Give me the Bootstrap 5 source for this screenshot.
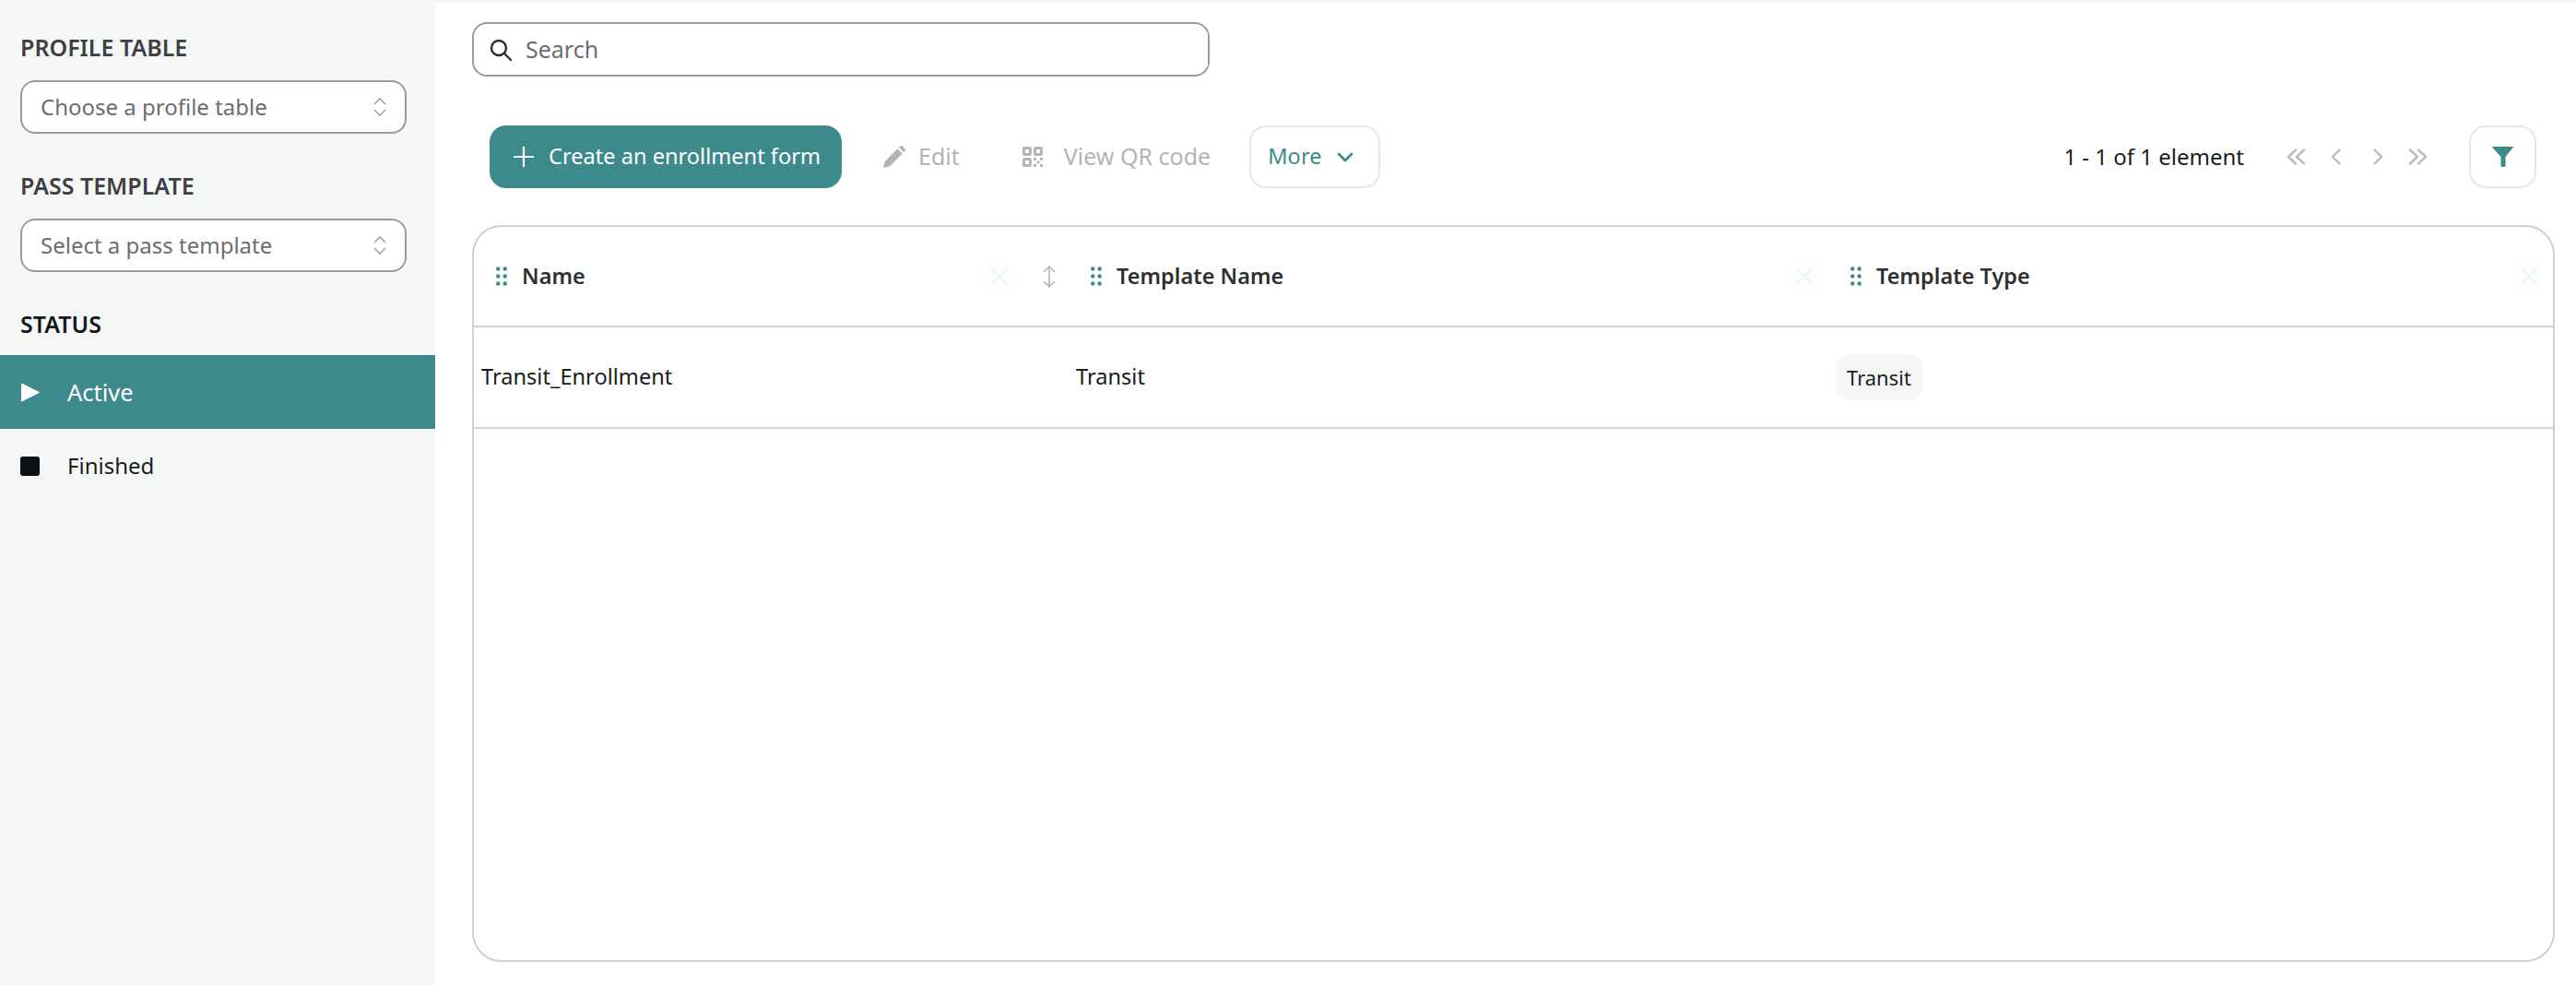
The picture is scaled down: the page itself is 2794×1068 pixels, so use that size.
<!DOCTYPE html>
<html lang="en">
<head>
  <meta charset="UTF-8" />
  <meta name="viewport" content="width=device-width, initial-scale=1" />
  <title>Enrollment forms</title>
  <link href="https://cdn.jsdelivr.net/npm/bootstrap@5.3.0/dist/css/bootstrap.min.css" rel="stylesheet" />
  <style>
    html, body { height: 100%; }
    body { font-family: "Noto Sans", "Liberation Sans", sans-serif; font-size: 23.600px; color: #1a1d20; background: #fff; border-top: 3px solid #f6f7f7; overflow: hidden; }
    .app-shell { height: 100%; }
    .side-panel { width: 472px; flex: none; background: #f5f7f7; padding-top: 32px; }
    .side-label { font-size: 25px; font-weight: 600; color: #3d3f42; line-height: 32px; padding-left: 22px; margin-bottom: 20px; }
    .side-label.dark { color: #14171a; margin-bottom: 18px; }
    .side-select { width: 419px; height: 58px; margin: 0 0 40px 22px; font-size: 24px; color: #6b6d6f; background-color: #fff; border: 2px solid #9b9b9b; border-radius: 16px; padding: 0 50px 0 20px;
      background-image: url("data:image/svg+xml,%3csvg xmlns='http://www.w3.org/2000/svg' viewBox='0 0 14 22'%3e%3cpath fill='none' stroke='%23a3a3a3' stroke-width='1.6' d='M1 8l6-6 6 6M1 14l6 6 6-6'/%3e%3c/svg%3e");
      background-size: 14px 22px; background-position: right 20px center; }
    .status-list .list-group-item { height: 80px; display: flex; align-items: center; gap: 30px; padding: 0 0 0 22px; border: 0; background: transparent; color: #1a1d20; font-size: 24px; border-radius: 0; }
    .status-list .list-group-item.active { background: #3d8a8c; color: #fff; font-size: 25.500px; }
    .stop-box { width: 21px; height: 21px; background: #0d1116; border-radius: 3px; flex: none; }
    .content-pane { min-width: 0; padding: 21px 23px 25px 40px; }
    .search-box { width: 800px; height: 59px; border: 2px solid #9b9b9b; border-radius: 16px; padding-left: 17px; gap: 15px; }
    .search-box input { border: 0; outline: 0; padding: 0; flex: 1; font-size: 25px; min-width: 0; }
    .search-box input::placeholder { color: #6b6d6f; opacity: 1; }
    .tool-row { margin: 53px 20px 40px 19px; gap: 22px; height: 68px; }
    .btn-teal { background: #3d8a8c; color: #fff; border: 0; border-radius: 18px; height: 68px; padding: 0 23px 0 26px; font-size: 23.600px; gap: 16px; }
    .btn-teal:hover { background: #3d8a8c; color: #fff; }
    .btn-off { color: #b4b4b4; border: 0; padding: 0 23px; font-size: 25px; gap: 14px; }
    .btn-off.qr { gap: 23px; padding-right: 20px; }
    .btn-outline-soft { height: 68px; border: 2px solid #e6e8e8; border-radius: 18px; background: #fff; color: #3d8a8c; font-size: 23.600px; }
    .more-btn { padding: 0 27px 0 18px; gap: 17px; }
    .filter-btn { width: 73px; padding: 0; margin-left: 45px; justify-content: center; }
    .page-count { font-size: 24px; color: #1a1d20; margin-right: 46px; }
    .pager { gap: 27px; }
    .pager .mid { margin-left: 8px; }
    .data-frame { flex: 1; border: 2px solid #d0d0d0; border-radius: 32px; overflow: hidden; min-height: 0; }
    .data-table { table-layout: fixed; margin: 0; }
    .data-table th, .data-table td { border-bottom: 2px solid #d0d0d0; vertical-align: middle; padding: 0 0 0 8px; box-shadow: none; }
    .data-table th { height: 108px; padding-left: 24px; font-weight: 600; color: #2d2f31; font-size: 23.500px; }
    .data-table td { height: 110px; font-size: 23.600px; color: #1a1d20; }
    .col-one { width: 645px; }
    .col-two { width: 824px; }
    .head-cell { gap: 16px; }
    .close-x { margin-left: auto; width: 28px; height: 34px; background: #fcfdfd; display: flex; align-items: center; justify-content: center; margin-right: 12px; border-radius: 6px; }
    .close-x.with-sort { margin-right: 0; }
    .sort-icon { margin: 0 14px 0 17px; }
    .type-chip { display: inline-flex; align-items: center; height: 50px; padding: 0 12px; font-size: 22px; background: #f5f7f7; border-radius: 14px; }
  </style>
</head>
<body>
  <div class="app-shell d-flex">
    <aside class="side-panel">
      <div class="side-label">PROFILE TABLE</div>
      <select class="form-select side-select"><option>Choose a profile table</option></select>
      <div class="side-label">PASS TEMPLATE</div>
      <select class="form-select side-select"><option>Select a pass template</option></select>
      <div class="side-label dark">STATUS</div>
      <div class="list-group status-list">
        <a class="list-group-item active" href="#">
          <svg width="21" height="21" viewBox="0 0 21 21"><path fill="#fff" stroke="#fff" stroke-linejoin="round" d="M1.500 1v19l19-9.500z"/></svg>
          Active
        </a>
        <a class="list-group-item" href="#"><span class="stop-box"></span>Finished</a>
      </div>
    </aside>

    <main class="content-pane flex-grow-1 d-flex flex-column">
      <div class="search-box d-flex align-items-center">
        <svg width="24" height="24" viewBox="0 0 24 24" fill="none" stroke="#2b2d2f" stroke-width="2.400" stroke-linecap="round"><circle cx="10" cy="10" r="8"/><path d="M16 16l7 7"/></svg>
        <input type="text" placeholder="Search" />
      </div>

      <div class="tool-row d-flex align-items-center">
        <button class="btn btn-teal d-flex align-items-center">
          <svg width="22" height="22" viewBox="0 0 22 22" stroke="#fff" stroke-width="2.200" stroke-linecap="round"><path d="M11 1v20M1 11h20"/></svg>
          Create an enrollment form
        </button>
        <button class="btn btn-off d-flex align-items-center">
          <svg width="24" height="24" viewBox="0 0 24 24" fill="#b4b4b4"><path d="M0 24l1.800-7L15.500 3.300l5.200 5.200L7 22.200zM17 1.800l1.300-1.300c.7-.7 1.800-.7 2.500 0l2.700 2.700c.7.7.7 1.800 0 2.500L22.200 7z"/></svg>
          Edit
        </button>
        <button class="btn btn-off qr d-flex align-items-center">
          <svg width="22" height="22" viewBox="0 0 22 22" fill="#b4b4b4"><path fill-rule="evenodd" d="M2 0h6a2 2 0 0 1 2 2v6a2 2 0 0 1-2 2H2a2 2 0 0 1-2-2V2a2 2 0 0 1 2-2zm1 3v4h4V3zM14 0h6a2 2 0 0 1 2 2v6a2 2 0 0 1-2 2h-6a2 2 0 0 1-2-2V2a2 2 0 0 1 2-2zm1 3v4h4V3zM2 12h6a2 2 0 0 1 2 2v6a2 2 0 0 1-2 2H2a2 2 0 0 1-2-2v-6a2 2 0 0 1 2-2zm1 3v4h4v-4z"/><path d="M12 12h3v3h-3zM19 12h3v3h-3zM15.500 15.500h3v3h-3zM12 19h3v3h-3zM19 19h3v3h-3z"/></svg>
          View QR code
        </button>
        <button class="btn btn-outline-soft more-btn d-flex align-items-center">
          More
          <svg width="18" height="11" viewBox="0 0 18 11" fill="none" stroke="#3d8a8c" stroke-width="2.800" stroke-linecap="round" stroke-linejoin="round"><path d="M2 2l7 7 7-7"/></svg>
        </button>

        <div class="ms-auto d-flex align-items-center">
          <span class="page-count">1 - 1 of 1 element</span>
          <div class="pager d-flex align-items-center">
            <svg width="21" height="18" viewBox="0 0 21 18" fill="none" stroke="#bbb" stroke-width="2.400" stroke-linecap="round" stroke-linejoin="round"><path d="M10 1.500L2 9l8 7.500M19 1.500L11 9l8 7.500"/></svg>
            <svg width="11" height="18" viewBox="0 0 11 18" fill="none" stroke="#bbb" stroke-width="2.400" stroke-linecap="round" stroke-linejoin="round"><path d="M9.500 1.500L2 9l7.500 7.500"/></svg>
            <svg class="mid" width="11" height="18" viewBox="0 0 11 18" fill="none" stroke="#bbb" stroke-width="2.400" stroke-linecap="round" stroke-linejoin="round"><path d="M1.500 1.500L9 9l-7.500 7.500"/></svg>
            <svg width="21" height="18" viewBox="0 0 21 18" fill="none" stroke="#bbb" stroke-width="2.400" stroke-linecap="round" stroke-linejoin="round"><path d="M2 1.500L10 9l-8 7.500M11 1.500L19 9l-8 7.500"/></svg>
          </div>
          <button class="btn btn-outline-soft filter-btn d-flex align-items-center">
            <svg width="25" height="22" viewBox="0 0 24 22" fill="#3d8a8c"><path d="M0 0h24L15 11v10l-1 1h-3l-1-1V11z"/></svg>
          </button>
        </div>
      </div>

      <div class="data-frame">
        <table class="table data-table">
          <colgroup><col class="col-one" /><col class="col-two" /><col /></colgroup>
          <thead>
            <tr>
              <th>
                <div class="head-cell d-flex align-items-center">
                  <svg width="12" height="21" viewBox="0 0 12 21" fill="#3d8a8c"><circle cx="2.300" cy="2.500" r="2.200"/><circle cx="9.700" cy="2.500" r="2.200"/><circle cx="2.300" cy="10.500" r="2.200"/><circle cx="9.700" cy="10.500" r="2.200"/><circle cx="2.300" cy="18.500" r="2.200"/><circle cx="9.700" cy="18.500" r="2.200"/></svg>
                  Name
                  <span class="close-x with-sort"><svg width="18" height="18" viewBox="0 0 18 18" stroke="#e6f1f1" stroke-width="1.400"><path d="M1 1l16 16M17 1L1 17"/></svg></span>
                  <svg class="sort-icon" width="14" height="24" viewBox="0 0 14 24" fill="none" stroke="#b5b5b5" stroke-width="1.600" stroke-linecap="round" stroke-linejoin="round"><path d="M7 1v22M1.500 6.500L7 1l5.500 5.500M1.500 17.500L7 23l5.500-5.500"/></svg>
                </div>
              </th>
              <th>
                <div class="head-cell d-flex align-items-center">
                  <svg width="12" height="21" viewBox="0 0 12 21" fill="#3d8a8c"><circle cx="2.300" cy="2.500" r="2.200"/><circle cx="9.700" cy="2.500" r="2.200"/><circle cx="2.300" cy="10.500" r="2.200"/><circle cx="9.700" cy="10.500" r="2.200"/><circle cx="2.300" cy="18.500" r="2.200"/><circle cx="9.700" cy="18.500" r="2.200"/></svg>
                  Template Name
                  <span class="close-x"><svg width="18" height="18" viewBox="0 0 18 18" stroke="#e6f1f1" stroke-width="1.400"><path d="M1 1l16 16M17 1L1 17"/></svg></span>
                </div>
              </th>
              <th>
                <div class="head-cell d-flex align-items-center">
                  <svg width="12" height="21" viewBox="0 0 12 21" fill="#3d8a8c"><circle cx="2.300" cy="2.500" r="2.200"/><circle cx="9.700" cy="2.500" r="2.200"/><circle cx="2.300" cy="10.500" r="2.200"/><circle cx="9.700" cy="10.500" r="2.200"/><circle cx="2.300" cy="18.500" r="2.200"/><circle cx="9.700" cy="18.500" r="2.200"/></svg>
                  Template Type
                  <span class="close-x"><svg width="18" height="18" viewBox="0 0 18 18" stroke="#e6f1f1" stroke-width="1.400"><path d="M1 1l16 16M17 1L1 17"/></svg></span>
                </div>
              </th>
            </tr>
          </thead>
          <tbody>
            <tr>
              <td>Transit_Enrollment</td>
              <td>Transit</td>
              <td><span class="type-chip">Transit</span></td>
            </tr>
          </tbody>
        </table>
      </div>
    </main>
  </div>
</body>
</html>
